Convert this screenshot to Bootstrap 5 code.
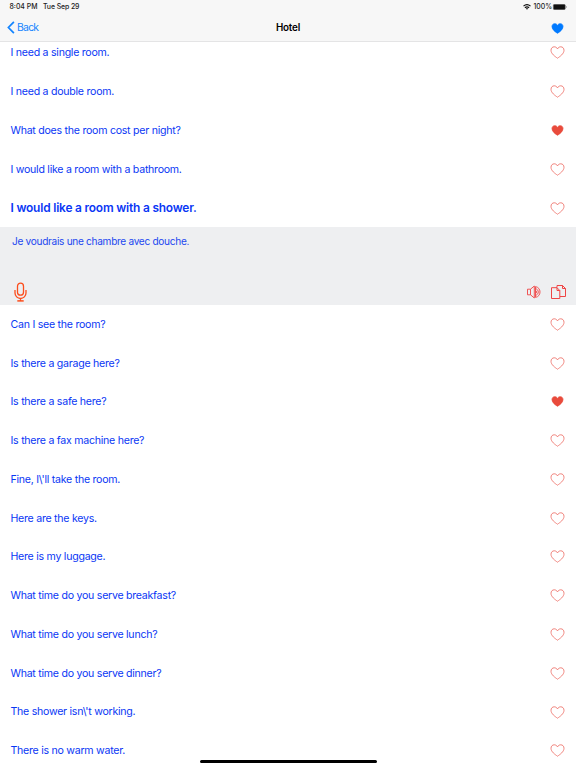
<!DOCTYPE html>
<html lang="en">
<head>
<meta charset="utf-8">
<meta name="viewport" content="width=device-width, initial-scale=1">
<title>Hotel</title>
<link href="https://cdn.jsdelivr.net/npm/bootstrap@5.3.0/dist/css/bootstrap.min.css" rel="stylesheet">
<style>
body{font-family:Inter,"Liberation Sans",sans-serif;height:768px;overflow:hidden;background:#fff}
.topbar{height:42px;background:#f7f7f7;border-bottom:1px solid #e4e4e5;z-index:5}
.status{height:14px;font-size:6.9px;font-weight:500;color:#222;padding:0 9px 0 9.5px}
.date{margin-left:5.500px;letter-spacing:-.08px}
.pct{margin-left:2px;letter-spacing:-.02px}
.titlebar{height:28px;font-size:9.8px;padding:0 7px}
.hd{letter-spacing:-.17px;padding-top:1px}
.side{flex:1 1 0}
.back{color:#1484ff;text-decoration:none;font-size:10.4px}
.backtxt{margin-left:2px;letter-spacing:-.75px}
.phrases{margin-top:-8.4px}
.phrase{height:38.77px;padding:0 11px 0 10.5px;font-size:10.6px;letter-spacing:-.26px;color:#0a37f5;line-height:1}
.phrase:not(.chosen) span{padding-top:1.400px}
.phrase.chosen{font-size:11.9px;font-weight:600;letter-spacing:-.18px}
.answer{height:77.54px;background:#eeeff1;color:#2348f0;font-size:10.1px;letter-spacing:-.3px;padding:7.5px 9px 3px 12px}
.heart{width:15px;height:13px;fill:none;stroke:#ee766e;stroke-width:.9}
.heart.full{fill:#e94b3c;stroke:#e94b3c;width:13px;height:11px;margin-right:1px}
.heart.blue{fill:#007aff;stroke:#007aff;width:13px;height:11px;margin-right:5px}
.homebar{width:177px;height:3px;left:199.500px;top:760.300px;z-index:6}
</style>
</head>
<body>
<svg class="d-none">
<symbol id="h" viewBox="0 0 15 13"><path d="M7.5 12.2C5 10.5 1 7.7 1 4.3 1 2.2 2.4.8 4.2.8 5.700.8 6.900 1.600 7.500 2.900 8.100 1.600 9.300.8 10.800.8 12.600.8 14 2.200 14 4.300 14 7.700 10 10.500 7.500 12.200Z"/></symbol>
</svg>
<header class="topbar position-relative">
  <div class="status d-flex justify-content-between align-items-center">
    <div class="d-flex"><span class="clock">8:04 PM</span><span class="date">Tue Sep 29</span></div>
    <div class="d-flex align-items-center">
      <svg width="8" height="6" viewBox="0 0 8 6" fill="none" stroke="#111" stroke-width="1.15"><path d="M.5 2.200Q4-1 7.500 2.200M1.900 3.800Q4 1.900 6.100 3.800"/><path d="M2.900 4.400Q4 3.500 5.100 4.400L4 5.700Z" fill="#111" stroke="none"/></svg>
      <span class="pct">100%</span>
      <svg class="batt" width="15" height="6" viewBox="0 0 15 6"><rect x="1.300" y=".3" width="12" height="5.400" rx="1.300" fill="#111" stroke="#777" stroke-width=".5"/><path d="M14 2v2q.8-.3.8-1t-.8-1" fill="#888"/></svg>
    </div>
  </div>
  <nav class="titlebar d-flex align-items-center">
    <a class="back side d-flex align-items-center" href="#"><svg width="8" height="13" viewBox="0 0 8 13" fill="none" stroke="#1484ff" stroke-width="1.700"><path d="M6.900.9 1.400 6.500l5.500 5.600"/></svg><span class="backtxt">Back</span></a>
    <span class="hd fw-semibold text-black">Hotel</span>
    <span class="side d-flex justify-content-end"><svg class="heart blue"><use href="#h"/></svg></span>
  </nav>
</header>
<main class="phrases">
  <div class="phrase d-flex align-items-center justify-content-between"><span>I need a single room.</span><svg class="heart"><use href="#h"/></svg></div>
  <div class="phrase d-flex align-items-center justify-content-between"><span>I need a double room.</span><svg class="heart"><use href="#h"/></svg></div>
  <div class="phrase d-flex align-items-center justify-content-between"><span>What does the room cost per night?</span><svg class="heart full"><use href="#h"/></svg></div>
  <div class="phrase d-flex align-items-center justify-content-between"><span>I would like a room with a bathroom.</span><svg class="heart"><use href="#h"/></svg></div>
  <div class="phrase chosen d-flex align-items-center justify-content-between"><span>I would like a room with a shower.</span><svg class="heart"><use href="#h"/></svg></div>
  <section class="answer d-flex flex-column justify-content-between">
    <span class="lh-sm">Je voudrais une chambre avec douche.</span>
    <div class="d-flex justify-content-between align-items-center">
      <svg width="17" height="20" viewBox="0 0 17 20" fill="none" stroke="#fc4d1c" stroke-width="1.300"><rect x="5.500" y="1.200" width="6" height="12" rx="3"/><path d="M3 8v3a5.500 5.500 0 0 0 11 0V8M8.500 16.500V19" /><path d="M5.300 18.900h6.400" stroke-width="1.500"/></svg>
      <div class="d-flex align-items-center">
        <svg class="me-2" width="16" height="16" viewBox="0 0 16 16" fill="none" stroke="#ef4444" stroke-width=".9"><path d="M1.500 5.200h3v5.600h-3zM4.500 5.200 8.300 2v12l-3.800-3.200M9.500 2.600C15.500 3.600 15.500 12.400 9.500 13.400zM9.500 4.700c3.700.6 3.700 6 0 6.600M9.500 6.700c1.600.3 1.600 2.300 0 2.600"/></svg>
        <svg width="17" height="16" viewBox="0 0 17 16" fill="none" stroke="#ef4444" stroke-width="1"><path d="M7 3.500V1.500h5.500l3 3v8H10"/><path d="M12.500 1.500v3h3M1.500 3.700h5.500l2.800 2.800v8H1.500zM7 3.700v2.800h2.800"/></svg>
      </div>
    </div>
  </section>
  <div class="phrase d-flex align-items-center justify-content-between"><span>Can I see the room?</span><svg class="heart"><use href="#h"/></svg></div>
  <div class="phrase d-flex align-items-center justify-content-between"><span>Is there a garage here?</span><svg class="heart"><use href="#h"/></svg></div>
  <div class="phrase d-flex align-items-center justify-content-between"><span>Is there a safe here?</span><svg class="heart full"><use href="#h"/></svg></div>
  <div class="phrase d-flex align-items-center justify-content-between"><span>Is there a fax machine here?</span><svg class="heart"><use href="#h"/></svg></div>
  <div class="phrase d-flex align-items-center justify-content-between"><span>Fine, I\'ll take the room.</span><svg class="heart"><use href="#h"/></svg></div>
  <div class="phrase d-flex align-items-center justify-content-between"><span>Here are the keys.</span><svg class="heart"><use href="#h"/></svg></div>
  <div class="phrase d-flex align-items-center justify-content-between"><span>Here is my luggage.</span><svg class="heart"><use href="#h"/></svg></div>
  <div class="phrase d-flex align-items-center justify-content-between"><span>What time do you serve breakfast?</span><svg class="heart"><use href="#h"/></svg></div>
  <div class="phrase d-flex align-items-center justify-content-between"><span>What time do you serve lunch?</span><svg class="heart"><use href="#h"/></svg></div>
  <div class="phrase d-flex align-items-center justify-content-between"><span>What time do you serve dinner?</span><svg class="heart"><use href="#h"/></svg></div>
  <div class="phrase d-flex align-items-center justify-content-between"><span>The shower isn\'t working.</span><svg class="heart"><use href="#h"/></svg></div>
  <div class="phrase d-flex align-items-center justify-content-between"><span>There is no warm water.</span><svg class="heart"><use href="#h"/></svg></div>
</main>
<div class="homebar position-fixed bg-black rounded-pill"></div>
<script src="https://cdn.jsdelivr.net/npm/bootstrap@5.3.0/dist/js/bootstrap.bundle.min.js"></script>
</body>
</html>
